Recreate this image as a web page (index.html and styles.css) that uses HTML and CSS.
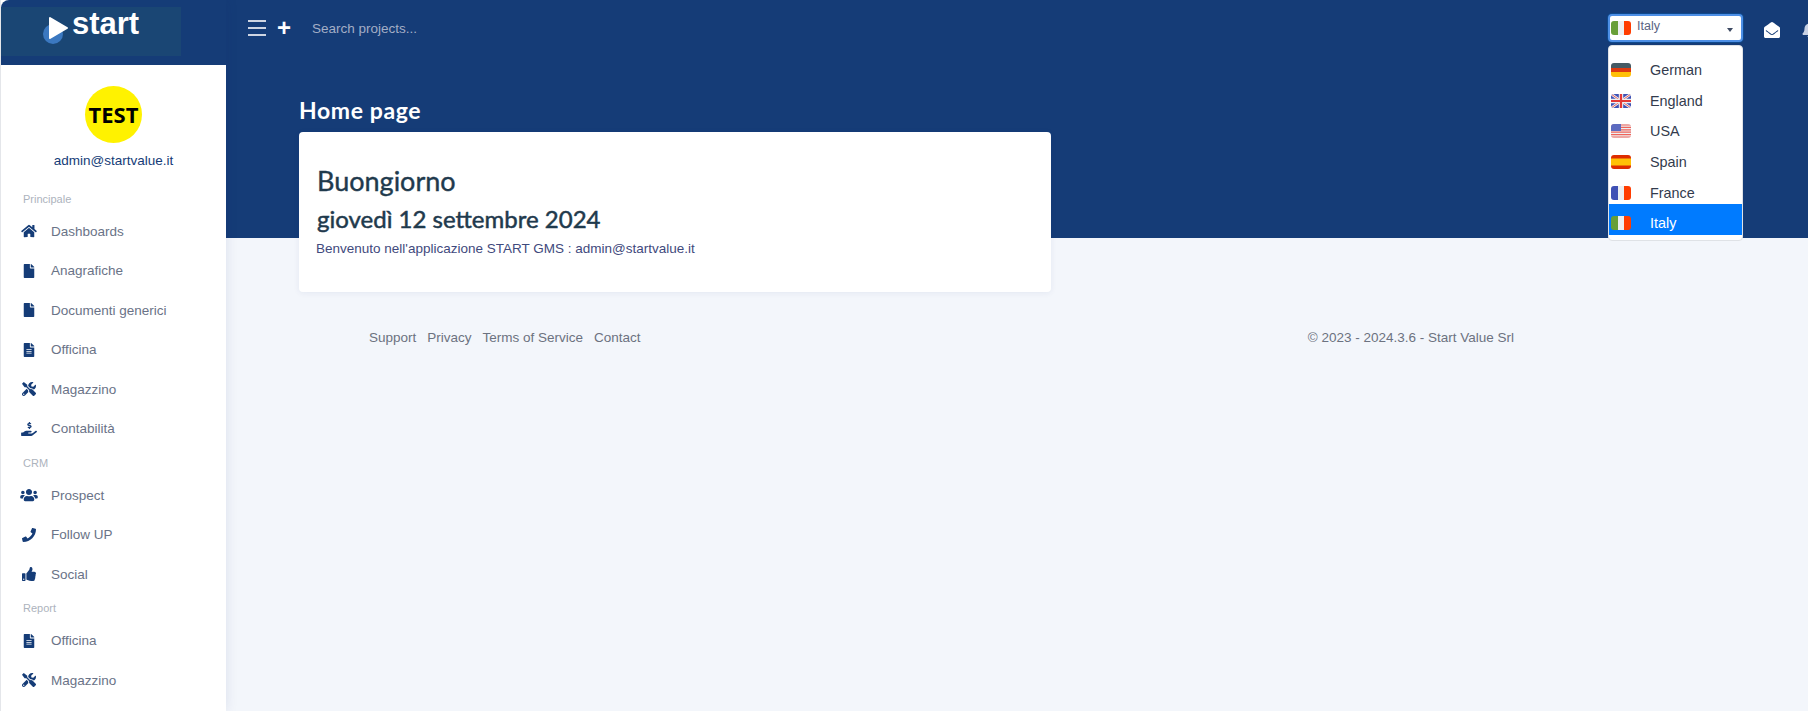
FILE: index.html
```html
<!DOCTYPE html>
<html lang="en">
<head>
    <meta charset="UTF-8">
    <meta name="viewport" content="width=device-width, initial-scale=1.0">
    <title>Home page</title>
    <link rel="stylesheet" href="styles.css">
</head>
<body>
    <!-- Icon set -->
    <svg class="defs" aria-hidden="true">
        <symbol id="i-home" viewBox="0 0 576 512"><path d="M280.37 148.26L96 300.11V464a16 16 0 0 0 16 16l112.06-.29a16 16 0 0 0 15.92-16V368a16 16 0 0 1 16-16h64a16 16 0 0 1 16 16v95.64a16 16 0 0 0 16 16.05L464 480a16 16 0 0 0 16-16V300L295.67 148.26a12.19 12.19 0 0 0-15.3 0zM571.6 251.47L488 182.56V44.05a12 12 0 0 0-12-12h-56a12 12 0 0 0-12 12v72.61L318.47 43a48 48 0 0 0-61 0L4.34 251.47a12 12 0 0 0-1.6 16.9l25.5 31A12 12 0 0 0 45.15 301l235.22-193.74a12.19 12.19 0 0 1 15.3 0L530.9 301a12 12 0 0 0 16.9-1.6l25.5-31a12 12 0 0 0-1.7-16.93z"/></symbol>
        <symbol id="i-file" viewBox="0 0 384 512"><path d="M224 136V0H24C10.7 0 0 10.7 0 24v464c0 13.3 10.7 24 24 24h336c13.3 0 24-10.7 24-24V160H248c-13.2 0-24-10.8-24-24zm160-14.1v6.1H256V0h6.1c6.4 0 12.5 2.5 17 7l97.9 98c4.5 4.5 7 10.6 7 16.9z"/></symbol>
        <symbol id="i-file-alt" viewBox="0 0 384 512"><path d="M224 136V0H24C10.7 0 0 10.7 0 24v464c0 13.3 10.7 24 24 24h336c13.3 0 24-10.7 24-24V160H248c-13.2 0-24-10.8-24-24zm64 236c0 6.6-5.4 12-12 12H108c-6.6 0-12-5.4-12-12v-8c0-6.6 5.4-12 12-12h168c6.6 0 12 5.4 12 12v8zm0-64c0 6.6-5.4 12-12 12H108c-6.6 0-12-5.4-12-12v-8c0-6.6 5.4-12 12-12h168c6.6 0 12 5.4 12 12v8zm0-72v8c0 6.6-5.4 12-12 12H108c-6.6 0-12-5.4-12-12v-8c0-6.6 5.4-12 12-12h168c6.6 0 12 5.4 12 12zm96-114.1v6.1H256V0h6.1c6.4 0 12.5 2.5 17 7l97.9 98c4.5 4.5 7 10.6 7 16.9z"/></symbol>
        <symbol id="i-tools" viewBox="0 0 512 512"><path d="M501.1 395.7L384 278.6c-23.1-23.1-57.6-27.6-85.4-13.9L192 158.1V96L64 0 0 64l96 128h62.1l106.6 106.6c-13.6 27.8-9.2 62.3 13.9 85.4l117.1 117.1c14.6 14.6 38.2 14.6 52.7 0l52.7-52.7c14.5-14.6 14.5-38.2 0-52.7zM331.7 225c28.3 0 54.9 11 74.9 31l19.4 19.4c15.8-6.9 30.8-16.5 43.8-29.5 37.1-37.1 49.7-89.3 37.9-136.7-2.2-9-13.5-12.1-20.1-5.5l-74.4 74.4-67.9-11.3L334 98.9l74.4-74.4c6.6-6.6 3.4-17.9-5.7-20.2-47.4-11.7-99.6.9-136.6 37.9-28.5 28.5-41.9 66.1-41.2 103.6l82.1 82.1c8.1-1.9 16.5-2.9 24.7-2.9zm-103.9 82l-56.7-56.7L18.7 402.8c-25 25-25 65.5 0 90.5s65.5 25 90.5 0l123.6-123.6c-7.6-19.9-9.9-41.6-5-62.7zM64 472c-13.2 0-24-10.8-24-24 0-13.3 10.7-24 24-24s24 10.7 24 24c0 13.2-10.7 24-24 24z"/></symbol>
        <symbol id="i-hand" viewBox="0 0 576 512"><path d="M271.06,144.3l54.27,14.3a8.59,8.59,0,0,1,6.63,8.1c0,4.6-4.09,8.4-9.12,8.4h-35.6a30,30,0,0,1-11.19-2.2c-5.24-2.2-11.28-1.7-15.3,2l-19,17.5a11.68,11.68,0,0,0-2.25,2.66,11.42,11.42,0,0,0,3.88,15.74,83.77,83.77,0,0,0,34.51,11.5V240c0,8.8,7.83,16,17.37,16h17.37c9.55,0,17.38-7.2,17.38-16V222.4c32.93-3.6,57.84-31,53.5-63-3.15-23-22.46-41.3-46.56-47.7L282.68,97.4a8.59,8.59,0,0,1-6.63-8.1c0-4.6,4.09-8.4,9.12-8.4h35.6A30,30,0,0,1,332,83.1c5.23,2.2,11.28,1.7,15.3-2l19-17.5A11.31,11.31,0,0,0,368.47,61a11.43,11.43,0,0,0-3.84-15.78,83.82,83.82,0,0,0-34.52-11.5V16c0-8.8-7.82-16-17.37-16H295.37C285.82,0,278,7.2,278,16V33.6c-32.89,3.6-57.85,31-53.51,63C227.63,119.6,247,137.9,271.06,144.3ZM565.27,328.1c-11.8-10.7-30.2-10-42.6,0L430.27,402a63.64,63.64,0,0,1-40,14H272a16,16,0,0,1,0-32h78.29c15.9,0,30.71-10.9,33.25-26.6a31.2,31.2,0,0,0,.46-5.46A32,32,0,0,0,352,320H192a117.66,117.66,0,0,0-74.1,26.29L71.4,384H16A16,16,0,0,0,0,400v96a16,16,0,0,0,16,16H372.77a64,64,0,0,0,40-14L564,377a32,32,0,0,0,1.28-48.9Z"/></symbol>
        <symbol id="i-users" viewBox="0 0 640 512"><path d="M96 224c35.3 0 64-28.7 64-64s-28.7-64-64-64-64 28.7-64 64 28.7 64 64 64zm448 0c35.3 0 64-28.7 64-64s-28.7-64-64-64-64 28.7-64 64 28.7 64 64 64zm32 32h-64c-17.6 0-33.5 7.1-45.1 18.6 40.3 22.1 68.9 62 75.1 109.4h66c17.7 0 32-14.3 32-32v-32c0-35.3-28.7-64-64-64zm-256 0c61.9 0 112-50.1 112-112S381.9 32 320 32 208 82.1 208 144s50.1 112 112 112zm76.8 32h-8.3c-20.8 10-43.9 16-68.5 16s-47.6-6-68.5-16h-8.3C179.6 288 128 339.6 128 403.2V432c0 26.5 21.5 48 48 48h288c26.5 0 48-21.5 48-48v-28.8c0-63.6-51.6-115.2-115.2-115.2zm-223.7-13.4C161.5 263.1 145.6 256 128 256H64c-35.3 0-64 28.7-64 64v32c0 17.7 14.3 32 32 32h65.9c6.3-47.4 34.9-87.3 75.2-109.4z"/></symbol>
        <symbol id="i-phone" viewBox="0 0 512 512"><path d="M493.4 24.6l-104-24c-11.3-2.6-22.9 3.3-27.5 13.9l-48 112c-4.2 9.8-1.4 21.3 6.9 28l60.6 49.6c-36 76.7-98.9 140.5-177.2 177.2l-49.6-60.6c-6.8-8.3-18.2-11.1-28-6.9l-112 48C3.9 366.5-2 378.1.6 389.4l24 104C27.1 504.2 36.7 512 48 512c256.1 0 464-207.5 464-464 0-11.2-7.7-20.9-18.6-23.4z"/></symbol>
        <symbol id="i-thumb" viewBox="0 0 512 512"><path d="M104 224H24c-13.255 0-24 10.745-24 24v240c0 13.255 10.745 24 24 24h80c13.255 0 24-10.745 24-24V248c0-13.255-10.745-24-24-24zM64 472c-13.255 0-24-10.745-24-24s10.745-24 24-24 24 10.745 24 24-10.745 24-24 24zM384 81.452c0 42.416-25.97 66.208-33.277 94.548h101.723c33.397 0 59.397 27.746 59.553 58.098.084 17.938-7.546 37.249-19.439 49.197l-.11.11c9.836 23.337 8.237 56.037-9.308 79.469 8.681 25.895-.069 57.704-16.382 74.757 4.298 17.598 2.244 32.575-6.148 44.632C440.202 511.587 389.616 512 346.839 512l-2.845-.001c-48.287-.017-87.806-17.598-119.56-31.725-15.957-7.099-36.821-15.887-52.651-16.178-6.54-.12-11.783-5.457-11.783-11.998v-213.77c0-3.2 1.282-6.271 3.558-8.521 39.614-39.144 56.648-80.587 89.117-113.111 14.804-14.832 20.188-37.236 25.393-58.902C282.515 39.293 291.817 0 312 0c24 0 72 8 72 81.452z"/></symbol>
        <symbol id="i-envelope" viewBox="0 0 512 512"><path d="M512 464c0 26.51-21.49 48-48 48H48c-26.51 0-48-21.49-48-48V200.724a48 48 0 0 1 18.387-37.776c24.913-19.529 45.501-35.365 164.2-121.511C199.412 29.17 232.797-.347 256 .003c23.198-.354 56.596 29.172 73.413 41.433 118.687 86.137 139.303 101.995 164.2 121.512A48 48 0 0 1 512 200.724V464zm-65.666-196.605c-2.563-3.728-7.7-4.595-11.339-1.907-22.845 16.873-55.462 40.705-105.582 77.079-16.825 12.266-50.21 41.781-73.413 41.43-23.211.344-56.559-29.143-73.413-41.43-50.114-36.37-82.734-60.204-105.582-77.079-3.639-2.688-8.776-1.821-11.339 1.907l-9.072 13.196a7.998 7.998 0 0 0 1.839 10.967c22.887 16.899 55.454 40.69 105.303 76.868 20.274 14.781 56.524 47.813 92.264 47.573 35.724.242 71.961-32.771 92.263-47.573 49.85-36.179 82.418-59.97 105.303-76.868a7.998 7.998 0 0 0 1.839-10.967l-9.071-13.196z"/></symbol>
        <symbol id="i-bell" viewBox="0 0 448 512"><path d="M224 512c35.32 0 63.97-28.65 63.97-64H160.03c0 35.35 28.65 64 63.97 64zm215.39-149.71c-19.32-20.76-55.47-51.99-55.47-154.29 0-77.7-54.48-139.9-127.94-155.16V32c0-17.67-14.32-32-31.98-32s-31.98 14.33-31.98 32v20.84C118.56 68.1 64.08 130.3 64.08 208c0 102.3-36.15 133.53-55.47 154.29-6 6.45-8.66 14.16-8.61 21.71.11 16.4 12.98 32 32.1 32h383.8c19.12 0 32-15.6 32.1-32 .05-7.55-2.61-15.27-8.61-21.71z"/></symbol>

        <!-- Flags -->
        <symbol id="f-de" viewBox="0 0 20 14"><rect width="20" height="5" fill="#455a64"/><rect y="5" width="20" height="4" fill="#dd3a10"/><rect y="9" width="20" height="5" fill="#ffc107"/></symbol>
        <symbol id="f-gb" viewBox="0 0 20 14"><rect width="20" height="14" fill="#3f51b5"/><path d="M0 0L20 14M20 0L0 14" stroke="#eceff1" stroke-width="2.6"/><path d="M0 0L20 14M20 0L0 14" stroke="#e53935" stroke-width=".8"/><path d="M10 0V14M0 7H20" stroke="#eceff1" stroke-width="4.4"/><path d="M10 0V14M0 7H20" stroke="#e53935" stroke-width="2.2"/></symbol>
        <symbol id="f-us" viewBox="0 0 20 14"><rect width="20" height="14" fill="#eceff1"/><path d="M0 1H20M0 3.4H20M0 5.8H20M0 8.2H20M0 10.6H20M0 13H20" stroke="#f0635a" stroke-width="1.2"/><rect width="10" height="7" fill="#5c6bc0"/></symbol>
        <symbol id="f-es" viewBox="0 0 20 14"><rect width="20" height="14" fill="#dd2c00"/><rect y="3.5" width="20" height="7" fill="#ffc107"/></symbol>
        <symbol id="f-fr" viewBox="0 0 20 14"><rect width="7" height="14" fill="#3f51b5"/><rect x="7" width="6" height="14" fill="#eceff1"/><rect x="13" width="7" height="14" fill="#ff3d00"/></symbol>
        <symbol id="f-it" viewBox="0 0 20 14"><rect width="7" height="14" fill="#689f38"/><rect x="7" width="6" height="14" fill="#eceff1"/><rect x="13" width="7" height="14" fill="#ff3d00"/></symbol>
    </svg>

    <div class="page">
        <aside class="sidebar">
            <div class="brand">
                <a class="logo" href="#">
                    <svg class="logo-mark" viewBox="0 0 26 32">
                        <circle cx="10" cy="17" r="10" fill="#3b78c0"/>
                        <path d="M7 1L24 11L7 21Z" fill="#fff" stroke="#fff" stroke-width="2" stroke-linejoin="round"/>
                    </svg>
                    <span class="logo-text">start</span>
                </a>
            </div>

            <div class="profile">
                <div class="avatar">TEST</div>
                <div class="profile-email">admin@startvalue.it</div>
            </div>

            <nav class="nav">
                <div class="nav-label">Principale</div>
                <a class="nav-item" href="#"><svg class="nav-icon"><use href="#i-home"/></svg>Dashboards</a>
                <a class="nav-item" href="#"><svg class="nav-icon"><use href="#i-file"/></svg>Anagrafiche</a>
                <a class="nav-item" href="#"><svg class="nav-icon"><use href="#i-file"/></svg>Documenti generici</a>
                <a class="nav-item" href="#"><svg class="nav-icon"><use href="#i-file-alt"/></svg>Officina</a>
                <a class="nav-item" href="#"><svg class="nav-icon"><use href="#i-tools"/></svg>Magazzino</a>
                <a class="nav-item" href="#"><svg class="nav-icon"><use href="#i-hand"/></svg>Contabilità</a>

                <div class="nav-label">CRM</div>
                <a class="nav-item" href="#"><svg class="nav-icon"><use href="#i-users"/></svg>Prospect</a>
                <a class="nav-item" href="#"><svg class="nav-icon"><use href="#i-phone"/></svg>Follow UP</a>
                <a class="nav-item" href="#"><svg class="nav-icon"><use href="#i-thumb"/></svg>Social</a>

                <div class="nav-label">Report</div>
                <a class="nav-item" href="#"><svg class="nav-icon"><use href="#i-file-alt"/></svg>Officina</a>
                <a class="nav-item" href="#"><svg class="nav-icon"><use href="#i-tools"/></svg>Magazzino</a>
                <a class="nav-item" href="#" aria-label="Contabilità"><svg class="nav-icon"><use href="#i-hand"/></svg></a>
            </nav>
        </aside>

        <main class="main">
            <header class="topbar">
                <button class="menu-toggle" aria-label="Menu"><span></span><span></span><span></span></button>
                <div class="add-btn">+</div>
                <input class="search" type="text" placeholder="Search projects...">

                <div class="lang">
                    <div class="lang-current">
                        <svg class="flag"><use href="#f-it"/></svg>
                        <span class="lang-name">Italy</span>
                        <span class="caret"></span>
                    </div>
                    <ul class="lang-menu">
                        <li class="lang-item"><svg class="flag"><use href="#f-de"/></svg>German</li>
                        <li class="lang-item"><svg class="flag"><use href="#f-gb"/></svg>England</li>
                        <li class="lang-item"><svg class="flag"><use href="#f-us"/></svg>USA</li>
                        <li class="lang-item"><svg class="flag"><use href="#f-es"/></svg>Spain</li>
                        <li class="lang-item"><svg class="flag"><use href="#f-fr"/></svg>France</li>
                        <li class="lang-item active"><svg class="flag"><use href="#f-it"/></svg>Italy</li>
                    </ul>
                </div>

                <svg class="top-icon"><use href="#i-envelope"/></svg>
                <svg class="top-icon bell"><use href="#i-bell"/></svg>
            </header>

            <div class="content">
                <h1 class="page-title">Home page</h1>
                <section class="card">
                    <h2 class="greeting">Buongiorno</h2>
                    <h3 class="date">giovedì 12 settembre 2024</h3>
                    <p class="welcome">Benvenuto nell'applicazione START GMS : admin@startvalue.it</p>
                </section>
            </div>

            <footer class="footer">
                <div class="footer-links">
                    <a href="#">Support</a>
                    <a href="#">Privacy</a>
                    <a href="#">Terms of Service</a>
                    <a href="#">Contact</a>
                </div>
                <div>© 2023 - 2024.3.6 - Start Value Srl</div>
            </footer>
        </main>
    </div>
</body>
</html>
```

FILE: styles.css
```css
body {
    margin: 0;
    background-color: #f3f6fb;
    font-family: "Liberation Sans", Arial, sans-serif;
    font-size: 13.5px;
    overflow: hidden;
}

a {
    color: inherit;
    text-decoration: none;
}

.defs {
    display: none;
}

.page {
    display: flex;
    height: 711px;
}

/* Sidebar */
.sidebar {
    flex: none;
    width: 225px;
    height: 711px;
    border-left: 1px solid #e4e6ea;
    background-color: #fff;
    box-shadow: 0 0 12px rgba(1, 41, 112, 0.1);
    position: relative;
    overflow: hidden;
}

.brand {
    height: 65px;
    box-sizing: border-box;
    padding-top: 7px;
    background-color: #153c77;
    border-top-left-radius: 8px;
}

.logo {
    display: flex;
    width: 180px;
    height: 49px;
    box-sizing: border-box;
    padding-left: 42px;
    background-color: #1a4674;
}

.logo-mark {
    width: 26px;
    height: 32px;
    margin-top: 10px;
}

.logo-text {
    margin: -1px 0 0 3px;
    color: #fff;
    font-size: 31px;
    font-weight: bold;
    line-height: 36px;
}

.profile {
    padding-top: 21px;
    text-align: center;
}

.avatar {
    width: 57px;
    height: 57px;
    margin: 0 auto;
    border-radius: 50%;
    background-color: #fff200;
    color: #000;
    font-family: "Open Sans", sans-serif;
    font-size: 22px;
    font-weight: 700;
    line-height: 57px;
}

.profile-email {
    margin-top: 7.5px;
    color: #153c77;
    line-height: 20px;
}

.nav {
    margin-top: 14px;
}

.nav-label {
    height: 27px;
    padding-left: 22px;
    color: #adb3bd;
    font-size: 11px;
    line-height: 29px;
}

.nav-item {
    display: flex;
    align-items: center;
    height: 39.5px;
    color: #6a7387;
}

.nav-icon {
    flex: none;
    width: 18px;
    height: 14px;
    margin: 0 13px 0 19px;
    fill: #153c77;
}

/* Main area */
.main {
    flex: 1;
    min-width: 0;
    background: linear-gradient(#153c77 238px, #f3f6fb 238px);
}

.topbar {
    display: flex;
    align-items: center;
    height: 56px;
    padding-left: 22px;
    margin-right: -9px;
}

.menu-toggle {
    display: flex;
    flex-direction: column;
    gap: 5px;
    width: 18px;
    padding: 0;
    border: none;
    background: none;
}

.menu-toggle span {
    display: block;
    height: 2px;
    background-color: #ced5e2;
}

.add-btn {
    margin-left: 11px;
    color: #fff;
    font-size: 24px;
    font-weight: bold;
    line-height: 24px;
}

.search {
    flex: 1;
    min-width: 0;
    margin-left: 21px;
    padding: 0;
    border: none;
    outline: none;
    background: none;
    color: #fff;
    font-family: inherit;
    font-size: 13.5px;
}

.search::placeholder {
    color: #a3aec6;
}

.lang {
    flex: none;
    position: relative;
    width: 135px;
    height: 28px;
    margin-right: 21px;
    margin-top: -1px;
}

.lang-current {
    display: flex;
    height: 28px;
    box-sizing: border-box;
    padding: 3px 0 0 1px;
    border: 2px solid #4d8fe6;
    border-radius: 4px;
    background-color: #fff;
    box-shadow: 0 0 0 1px #0f4a8e;
    color: #5a6383;
    font-size: 12.5px;
}

.lang-name {
    margin-left: 6px;
    line-height: 14px;
}

.caret {
    width: 0;
    height: 0;
    margin: 9px 8px 0 auto;
    border-top: 4px solid #3d4a63;
    border-left: 3.5px solid transparent;
    border-right: 3.5px solid transparent;
}

.flag {
    flex: none;
    width: 20px;
    height: 14px;
    border-radius: 3px;
}

.lang-current .flag {
    margin-top: 2px;
}

.lang-menu {
    position: absolute;
    top: 31.5px;
    left: 0;
    right: 0;
    z-index: 5;
    margin: 0;
    padding: 5px 0;
    list-style: none;
    border: 1px solid #dfe2e6;
    border-radius: 4px;
    background-color: #fff;
    box-sizing: border-box;
}

.lang-item {
    display: flex;
    align-items: center;
    height: 30.6px;
    box-sizing: border-box;
    padding: 8px 0 0 2px;
    color: #333b4d;
    font-size: 14.4px;
}

.lang-item .flag {
    margin-right: 19px;
}

.lang-item.active {
    background-color: #007bff;
    color: #fff;
}

.top-icon {
    flex: none;
    width: 16px;
    height: 16px;
    margin-top: 4px;
    fill: #fff;
}

.top-icon.bell {
    width: 15px;
    margin-left: 22px;
    fill: #c9d2e4;
}

.content {
    padding-left: 73px;
}

.page-title {
    margin: 0;
    padding-top: 41px;
    color: #fff;
    font-family: Lato, sans-serif;
    font-size: 23px;
    font-weight: 700;
    line-height: 26px;
    letter-spacing: 0.6px;
}

.card {
    width: 752px;
    height: 160px;
    margin-top: 9px;
    box-sizing: border-box;
    padding: 33px 18px 0;
    border-radius: 4px;
    background-color: #fff;
    box-shadow: 0 1px 6px rgba(1, 41, 112, 0.07);
}

.greeting {
    margin: 0;
    color: #1f3a4d;
    font-family: Lato, sans-serif;
    font-size: 27px;
    font-weight: 400;
    line-height: 32px;
    -webkit-text-stroke: 0.4px #1f3a4d;
}

.date {
    margin: 7px 0 0;
    color: #1f3a4d;
    font-family: Lato, sans-serif;
    font-size: 24px;
    font-weight: 400;
    line-height: 30px;
    -webkit-text-stroke: 0.5px #1f3a4d;
}

.welcome {
    margin: 6px 0 0 -1px;
    color: #3f4a7d;
    line-height: 18px;
}

.footer {
    display: flex;
    justify-content: space-between;
    width: 1145px;
    margin: 36px 0 0 143px;
    color: #6c7280;
    line-height: 20px;
}

.footer-links {
    display: flex;
    gap: 11px;
}
```
